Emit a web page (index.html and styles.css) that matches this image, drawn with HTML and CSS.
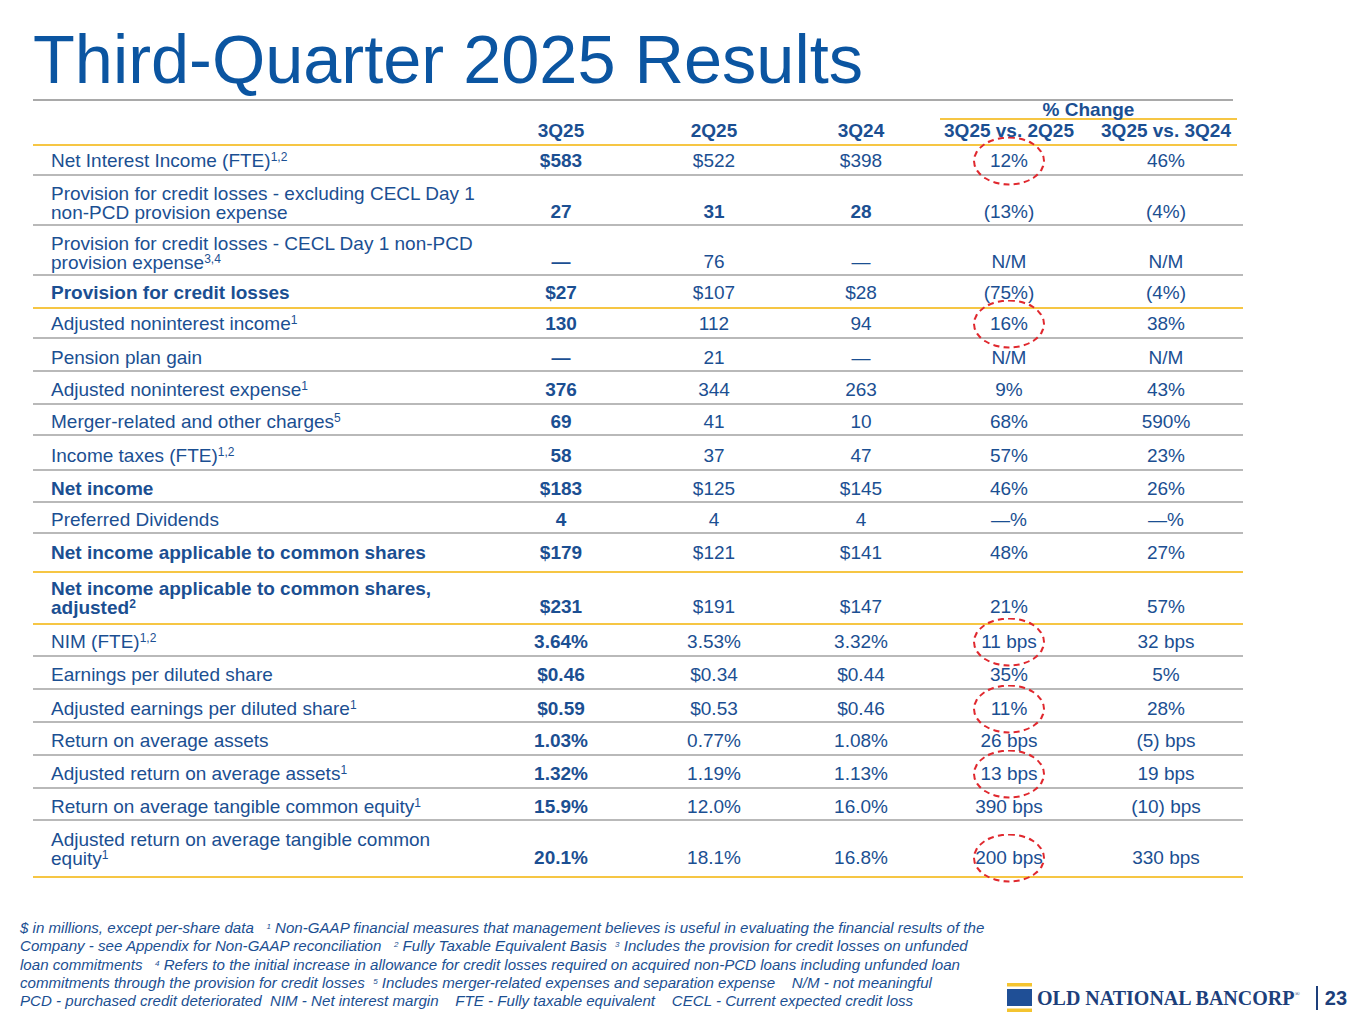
FILE: index.html
```html
<!DOCTYPE html>
<html lang="en">
<head>
<meta charset="utf-8">
<title>Third-Quarter 2025 Results</title>
<link rel="stylesheet" href="styles.css">
</head>
<body>
<div class="slide">
  <h1 class="title">Third-Quarter 2025 Results</h1>

  <div class="tbl">
    <div class="topline"></div>
    <div class="pc">% Change</div>
    <div class="row head y">
      <div class="lab"></div><div>3Q25</div><div>2Q25</div><div>3Q24</div><div>3Q25 vs. 2Q25</div><div>3Q25 vs. 3Q24</div>
    </div>

    <div class="row h30 p3">
      <div class="lab">Net Interest Income (FTE)<sup>1,2</sup></div><div class="b">$583</div><div>$522</div><div>$398</div><div><span class="circ">12%</span></div><div>46%</div>
    </div>
    <div class="row h50 p2">
      <div class="lab two">Provision for credit losses - excluding CECL Day 1<br>non-PCD provision expense</div><div class="b">27</div><div class="b">31</div><div class="b">28</div><div>(13%)</div><div>(4%)</div>
    </div>
    <div class="row h50 p2">
      <div class="lab two">Provision for credit losses - CECL Day 1 non-PCD<br>provision expense<sup>3,4</sup></div><div class="b">—</div><div>76</div><div>—</div><div>N/M</div><div>N/M</div>
    </div>
    <div class="row h33 p4 y">
      <div class="lab b">Provision for credit losses</div><div class="b">$27</div><div>$107</div><div>$28</div><div>(75%)</div><div>(4%)</div>
    </div>
    <div class="row h30 p3">
      <div class="lab">Adjusted noninterest income<sup>1</sup></div><div class="b">130</div><div>112</div><div>94</div><div><span class="circ">16%</span></div><div>38%</div>
    </div>
    <div class="row h33 p2">
      <div class="lab">Pension plan gain</div><div class="b">—</div><div>21</div><div>—</div><div>N/M</div><div>N/M</div>
    </div>
    <div class="row h33 p3">
      <div class="lab">Adjusted noninterest expense<sup>1</sup></div><div class="b">376</div><div>344</div><div>263</div><div>9%</div><div>43%</div>
    </div>
    <div class="row h31 p2">
      <div class="lab">Merger-related and other charges<sup>5</sup></div><div class="b">69</div><div>41</div><div>10</div><div>68%</div><div>590%</div>
    </div>
    <div class="row h35 p3">
      <div class="lab">Income taxes (FTE)<sup>1,2</sup></div><div class="b">58</div><div>37</div><div>47</div><div>57%</div><div>23%</div>
    </div>
    <div class="row h32 p2">
      <div class="lab b">Net income</div><div class="b">$183</div><div>$125</div><div>$145</div><div>46%</div><div>26%</div>
    </div>
    <div class="row h31 p2">
      <div class="lab">Preferred Dividends</div><div class="b">4</div><div>4</div><div>4</div><div>—%</div><div>—%</div>
    </div>
    <div class="row h39 p8 y">
      <div class="lab b">Net income applicable to common shares</div><div class="b">$179</div><div>$121</div><div>$141</div><div>48%</div><div>27%</div>
    </div>
    <div class="row h52 p6 y">
      <div class="lab b two">Net income applicable to common shares,<br>adjusted<sup>2</sup></div><div class="b">$231</div><div>$191</div><div>$147</div><div>21%</div><div>57%</div>
    </div>
    <div class="row h32 p3">
      <div class="lab">NIM (FTE)<sup>1,2</sup></div><div class="b">3.64%</div><div>3.53%</div><div>3.32%</div><div><span class="circ">11 bps</span></div><div>32 bps</div>
    </div>
    <div class="row h33 p3">
      <div class="lab">Earnings per diluted share</div><div class="b">$0.46</div><div>$0.34</div><div>$0.44</div><div>35%</div><div>5%</div>
    </div>
    <div class="row h33 p2">
      <div class="lab">Adjusted earnings per diluted share<sup>1</sup></div><div class="b">$0.59</div><div>$0.53</div><div>$0.46</div><div><span class="circ">11%</span></div><div>28%</div>
    </div>
    <div class="row h33 p3">
      <div class="lab">Return on average assets</div><div class="b">1.03%</div><div>0.77%</div><div>1.08%</div><div>26 bps</div><div>(5) bps</div>
    </div>
    <div class="row h33 p3">
      <div class="lab">Adjusted return on average assets<sup>1</sup></div><div class="b">1.32%</div><div>1.19%</div><div>1.13%</div><div><span class="circ">13 bps</span></div><div>19 bps</div>
    </div>
    <div class="row h32 p2">
      <div class="lab">Return on average tangible common equity<sup>1</sup></div><div class="b">15.9%</div><div>12.0%</div><div>16.0%</div><div>390 bps</div><div>(10) bps</div>
    </div>
    <div class="row h57 p8 y">
      <div class="lab two">Adjusted return on average tangible common<br>equity<sup>1</sup></div><div class="b">20.1%</div><div>18.1%</div><div>16.8%</div><div><span class="circ">200 bps</span></div><div>330 bps</div>
    </div>
  </div>

  <div class="foot">
    <div class="notes">
      <div class="ln">$ in millions, except per-share data   <sup>1</sup> Non-GAAP financial measures that management believes is useful in evaluating the financial results of the</div>
      <div class="ln">Company - see Appendix for Non-GAAP reconciliation   <sup>2</sup> Fully Taxable Equivalent Basis  <sup>3</sup> Includes the provision for credit losses on unfunded</div>
      <div class="ln">loan commitments   <sup>4</sup> Refers to the initial increase in allowance for credit losses required on acquired non-PCD loans including unfunded loan</div>
      <div class="ln">commitments through the provision for credit losses  <sup>5</sup> Includes merger-related expenses and separation expense    N/M - not meaningful</div>
      <div class="ln">PCD - purchased credit deteriorated  NIM - Net interest margin    FTE - Fully taxable equivalent    CECL - Current expected credit loss</div>
    </div>
    <div class="brand">
      <svg class="mark" width="25" height="29" viewBox="0 0 25 29" aria-hidden="true">
        <rect x="0" y="0" width="25" height="3.5" fill="#f4c430"/>
        <rect x="0" y="6" width="25" height="17" fill="#1f4f96"/>
        <rect x="0" y="25.5" width="25" height="3.5" fill="#f4c430"/>
      </svg>
      <span class="bname">OLD NATIONAL BANCORP<sup class="reg">®</sup></span>
      <span class="pg">23</span>
    </div>
  </div>
</div>
</body>
</html>
```

FILE: styles.css
```css
html, body {
  margin: 0;
  padding: 0;
  background: #ffffff;
}

.slide {
  width: 1365px;
  height: 1024px;
  overflow: hidden;
  font-family: "Liberation Sans", Arial, sans-serif;
  color: #1b4f92;
  box-sizing: border-box;
}

.title {
  margin: 0;
  padding: 26px 0 0 33px;
  font-size: 68.5px;
  line-height: 67px;
  font-weight: normal;
  color: #0b55a1;
  letter-spacing: 0;
}

.tbl {
  margin: 6px 0 0 33px;
  width: 1210px;
  font-size: 19px;
}

.topline {
  width: 1200px;
  height: 2px;
  background: #a9a9a9;
}

.pc {
  box-sizing: border-box;
  margin-left: 907px;
  width: 297px;
  height: 19px;
  border-bottom: 2px solid #f6c644;
  text-align: center;
  font-weight: bold;
  line-height: 17px;
}

.row {
  display: grid;
  grid-template-columns: 454px 148px 158px 136px 160px 154px;
  align-items: end;
  box-sizing: border-box;
  width: 1210px;
  border-bottom: 2px solid #b9b9b9;
}

.row > div {
  text-align: center;
  line-height: 20px;
  white-space: nowrap;
}

.row > .lab {
  text-align: left;
  padding-left: 18px;
}

.row > .two {
  line-height: 19px;
}

.head {
  height: 26px;
  padding-bottom: 3px;
  font-weight: bold;
  width: 1204px;
}

.y { border-bottom-color: #f6c644; }
.b { font-weight: bold; }

.h30 { height: 30px; }
.h31 { height: 31px; }
.h32 { height: 32px; }
.h33 { height: 33px; }
.h35 { height: 35px; }
.h39 { height: 39px; }
.h50 { height: 50px; }
.h52 { height: 52px; }
.h57 { height: 57px; }

.p2 { padding-bottom: 2px; }
.p3 { padding-bottom: 3px; }
.p4 { padding-bottom: 4px; }
.p6 { padding-bottom: 6px; }
.p8 { padding-bottom: 8px; }

sup {
  font-size: 12px;
  line-height: 0;
  vertical-align: 6px;
}

.circ {
  position: relative;
  display: inline-block;
}

.circ::after {
  content: "";
  position: absolute;
  left: 50%;
  top: 50%;
  width: 68px;
  height: 45px;
  transform: translate(-50%, -50%);
  border: 2px dashed #e0282e;
  border-radius: 50%;
}

.foot {
  display: flex;
  align-items: flex-end;
  margin-top: 41px;
  padding-left: 20px;
}

.notes {
  width: 985px;
  font-style: italic;
  font-size: 15.1px;
  line-height: 18.3px;
  color: #1b4f92;
}

.ln {
  white-space: pre;
  height: 18.3px;
}

.notes sup {
  font-size: 8px;
  vertical-align: 4px;
}

.brand {
  display: flex;
  align-items: center;
  margin-left: 2px;
  margin-bottom: -2px;
}

.mark {
  display: block;
  margin-right: 5px;
}

.bname {
  font-family: "Liberation Serif", "Times New Roman", serif;
  font-weight: bold;
  font-size: 20px;
  line-height: 24px;
  color: #1d3f7b;
  padding-right: 16px;
  border-right: 2px solid #1d3f7b;
}

.reg {
  font-size: 7px;
  vertical-align: 9px;
  font-weight: normal;
}

.pg {
  font-weight: bold;
  font-size: 20px;
  line-height: 24px;
  color: #1d3f7b;
  padding-left: 7px;
}
```
